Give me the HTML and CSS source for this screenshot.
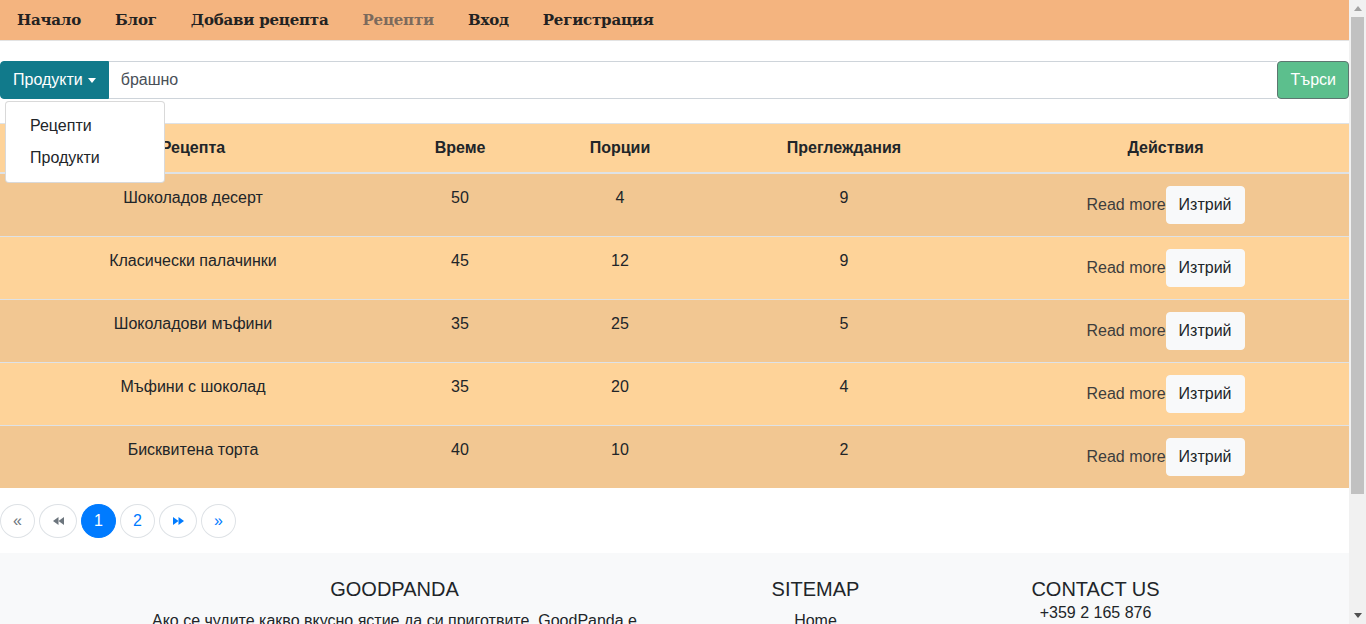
FILE: index.html
```html
<!DOCTYPE html>
<html lang="bg">
<head>
<meta charset="utf-8">
<title>GoodPanda - Рецепти</title>
<link rel="stylesheet" href="styles.css">
</head>
<body>
<nav class="topnav">
  <a class="nav-link" href="#">Начало</a>
  <a class="nav-link" href="#">Блог</a>
  <a class="nav-link" href="#">Добави рецепта</a>
  <a class="nav-link active" href="#">Рецепти</a>
  <a class="nav-link" href="#">Вход</a>
  <a class="nav-link" href="#">Регистрация</a>
</nav>

<main class="content">
  <form class="search">
    <div class="dropdown">
      <button type="button" class="dd-toggle">Продукти<span class="caret"></span></button>
      <div class="dd-menu">
        <a class="dd-item" href="#">Рецепти</a>
        <a class="dd-item" href="#">Продукти</a>
      </div>
    </div>
    <input class="search-input" type="text" value="брашно">
    <button type="button" class="search-btn">Търси</button>
  </form>

  <table class="recipes">
    <thead>
      <tr>
        <th class="c-name">Рецепта</th>
        <th class="c-time">Време</th>
        <th class="c-port">Порции</th>
        <th class="c-views">Преглеждания</th>
        <th class="c-act">Действия</th>
      </tr>
    </thead>
    <tbody>
      <tr class="dark">
        <td>Шоколадов десерт</td><td>50</td><td>4</td><td>9</td>
        <td><a class="more" href="#">Read more</a><button class="del">Изтрий</button></td>
      </tr>
      <tr class="light">
        <td>Класически палачинки</td><td>45</td><td>12</td><td>9</td>
        <td><a class="more" href="#">Read more</a><button class="del">Изтрий</button></td>
      </tr>
      <tr class="dark">
        <td>Шоколадови мъфини</td><td>35</td><td>25</td><td>5</td>
        <td><a class="more" href="#">Read more</a><button class="del">Изтрий</button></td>
      </tr>
      <tr class="light">
        <td>Мъфини с шоколад</td><td>35</td><td>20</td><td>4</td>
        <td><a class="more" href="#">Read more</a><button class="del">Изтрий</button></td>
      </tr>
      <tr class="dark">
        <td>Бисквитена торта</td><td>40</td><td>10</td><td>2</td>
        <td><a class="more" href="#">Read more</a><button class="del">Изтрий</button></td>
      </tr>
    </tbody>
  </table>

  <ul class="pager">
    <li><a class="pg disabled" href="#">«</a></li>
    <li><a class="pg icon disabled" href="#"><svg width="11" height="8" viewBox="0 0 11 8"><polygon points="5.5,0 0,4 5.5,8" /><polygon points="11,0 5.5,4 11,8" /></svg></a></li>
    <li><a class="pg current" href="#">1</a></li>
    <li><a class="pg" href="#">2</a></li>
    <li><a class="pg icon" href="#"><svg width="11" height="8" viewBox="0 0 11 8"><polygon points="0,0 5.5,4 0,8" /><polygon points="5.5,0 11,4 5.5,8" /></svg></a></li>
    <li><a class="pg" href="#">»</a></li>
  </ul>
</main>

<footer class="footer">
  <div class="footer-grid">
    <div class="f-col f-about">
      <h5 class="f-title">GOODPANDA</h5>
      <p class="f-text">Ако се чудите какво вкусно ястие да си приготвите, GoodPanda е мястото, където ще намерите вдъхновение за всеки ден.</p>
    </div>
    <div class="f-col f-map">
      <h5 class="f-title">SITEMAP</h5>
      <ul class="f-links">
        <li><a href="#">Home</a></li>
        <li><a href="#">Blog</a></li>
        <li><a href="#">Recipes</a></li>
        <li><a href="#">Login</a></li>
      </ul>
    </div>
    <div class="f-col f-contact">
      <h5 class="f-title tight">CONTACT US</h5>
      <p class="f-line">+359 2 165 876</p>
      <p class="f-line">info@goodpanda.bg</p>
      <p class="f-line">София, България</p>
    </div>
  </div>
</footer>

<div class="fake-scrollbar" aria-hidden="true">
  <div class="sb-btn sb-up"><svg width="8" height="5" viewBox="0 0 8 5"><polygon points="0,5 4,0 8,5" /></svg></div>
  <div class="sb-track"><div class="sb-thumb"></div></div>
  <div class="sb-btn sb-down"><svg width="8" height="5" viewBox="0 0 8 5"><polygon points="0,0 8,0 4,5" /></svg></div>
</div>
</body>
</html>
```

FILE: styles.css
```css
body {
  margin: 0 17px 0 0;
  font-family: "Liberation Sans", Arial, sans-serif;
  font-size: 16px;
  line-height: 1.5;
  color: #212529;
  background: #fff;
}

/* simulated window scrollbar (overlay at the right edge) */
.fake-scrollbar {
  position: fixed;
  top: 0;
  right: 0;
  width: 17px;
  height: 100vh;
  display: flex;
  flex-direction: column;
  background: #f1f1f1;
  z-index: 100;
}
.sb-btn {
  height: 17px;
  display: flex;
  align-items: center;
  justify-content: center;
}
.sb-up svg { fill: #a3a3a3; }
.sb-down svg { fill: #505050; }
.sb-track {
  flex: 1;
  padding: 0 2px;
}
.sb-thumb {
  height: 477px;
  background: #c1c1c1;
}

/* top navigation */
.topnav {
  display: flex;
  align-items: center;
  height: 40px;
  background: #f4b47f;
  border-bottom: 1px solid #e3e3e3;
}
.nav-link {
  padding: 0 17px;
  font-family: "DejaVu Serif", "Liberation Serif", serif;
  font-weight: bold;
  font-size: 15px;
  letter-spacing: -0.2px;
  color: #222;
  text-decoration: none;
}
.nav-link.active {
  color: #7c6a5c;
}

/* search */
.search {
  display: flex;
  margin: 20px 0 0;
}
.dropdown {
  position: relative;
}
.dd-toggle {
  display: flex;
  align-items: center;
  height: 38px;
  padding: 6px 12px;
  border: 1px solid #117a8b;
  border-radius: 4px 0 0 4px;
  background: #117a8b;
  color: #fff;
  font-family: "Liberation Sans", Arial, sans-serif;
  font-size: 16px;
  line-height: 24px;
}
.caret {
  display: inline-block;
  margin-left: 5px;
  border-top: 5px solid #fff;
  border-left: 4.5px solid transparent;
  border-right: 4.5px solid transparent;
}
.dd-menu {
  position: absolute;
  top: 40px;
  left: 5px;
  z-index: 10;
  width: 160px;
  box-sizing: border-box;
  padding: 8px 0;
  background: #fff;
  border: 1px solid rgba(0, 0, 0, 0.15);
  border-radius: 4px;
}
.dd-item {
  display: block;
  padding: 4px 24px;
  color: #212529;
  text-decoration: none;
  line-height: 24px;
}
.search-input {
  flex: 1;
  min-width: 0;
  height: 38px;
  box-sizing: border-box;
  padding: 6px 12px;
  margin: 0;
  border: 1px solid #ced4da;
  border-left: 0;
  border-right: 0;
  font-family: "Liberation Sans", Arial, sans-serif;
  font-size: 16px;
  color: #495057;
  outline: none;
}
.search-btn {
  height: 38px;
  padding: 6px 12px;
  border: 1px solid #5d7670;
  border-radius: 4px;
  background: #5cbf8d;
  color: #fff;
  font-family: "Liberation Sans", Arial, sans-serif;
  font-size: 16px;
  line-height: 24px;
}

/* table */
.recipes {
  width: 100%;
  margin-top: 24px;
  border-collapse: collapse;
  table-layout: fixed;
}
.recipes th,
.recipes td {
  padding: 12px;
  text-align: center;
  vertical-align: top;
  border-top: 1px solid #dee2e6;
  line-height: 24px;
}
.recipes thead th {
  background: #fed399;
  font-weight: bold;
  border-bottom: 2px solid #dee2e6;
}
.c-name { width: 362px; }
.c-time { width: 124px; }
.c-port { width: 148px; }
.c-views { width: 252px; }
.recipes tr.dark td { background: #f2c792; }
.recipes tr.light td { background: #fed399; }
.more {
  color: #3d3d3d;
  text-decoration: none;
}
.del {
  height: 38px;
  padding: 6px 12px;
  border: 1px solid #f8f9fa;
  border-radius: 4px;
  background: #f8f9fa;
  color: #212529;
  font-family: "Liberation Sans", Arial, sans-serif;
  font-size: 16px;
  line-height: 24px;
}

/* pagination */
.pager {
  display: flex;
  gap: 4px;
  list-style: none;
  margin: 16px 0 15px;
  padding: 0;
}
.pg {
  display: flex;
  align-items: center;
  justify-content: center;
  height: 34px;
  width: 35px;
  box-sizing: border-box;
  border: 1px solid #dee2e6;
  border-radius: 50%;
  color: #007bff;
  text-decoration: none;
  line-height: 20px;
}
.pg.icon {
  width: 38px;
}
.pg svg {
  fill: #007bff;
}
.pg.disabled {
  color: #6c757d;
}
.pg.disabled svg {
  fill: #6c757d;
}
.pg.current {
  background: #007bff;
  border-color: #007bff;
  color: #fff;
}

/* footer */
.footer {
  background: #f8f9fa;
  padding: 24px 0 20px;
  min-height: 219px;
  box-sizing: border-box;
}
.footer-grid {
  display: grid;
  grid-template-columns: 580px 262px 298px;
  width: 1140px;
  margin: 0 auto;
  text-align: center;
}
.f-about {
  padding: 0 45px;
}
.f-title {
  margin: 0 0 8px;
  font-size: 20px;
  font-weight: normal;
  line-height: 24px;
}
.f-title.tight {
  margin-bottom: 0;
}
.f-text {
  margin: 0;
}
.f-links {
  list-style: none;
  margin: 0;
  padding: 0;
}
.f-links a {
  color: #212529;
  text-decoration: none;
}
.f-line {
  margin: 0;
}
```
